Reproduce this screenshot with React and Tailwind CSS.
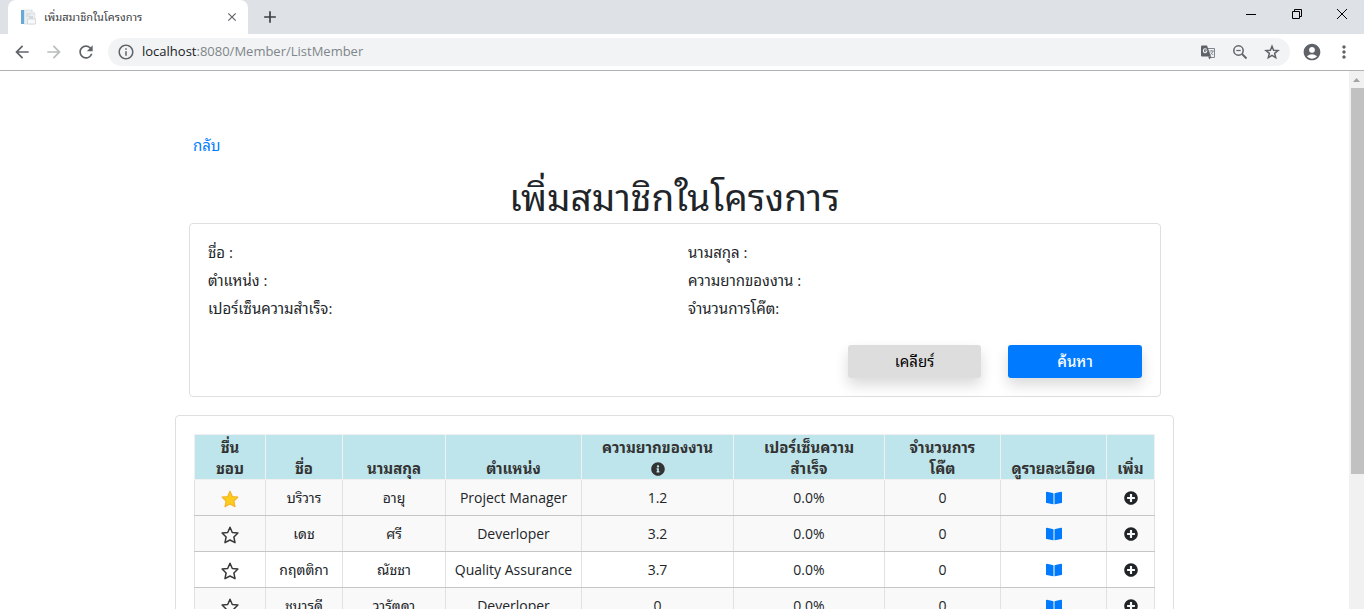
import {
  MdArrowBack, MdArrowForward, MdRefresh, MdInfoOutline,
  MdAccountCircle, MdMoreVert, MdClose, MdAdd,
} from "react-icons/md";
import { FaInfoCircle, FaPlusCircle } from "react-icons/fa";

const members = [
  { first: "บริวาร", last: "อายุ", role: "Project Manager", level: "1.2", done: "0.0%", codes: "0", favourite: true },
  { first: "เดช", last: "ศรี", role: "Deverloper", level: "3.2", done: "0.0%", codes: "0" },
  { first: "กฤตติกา", last: "ณัชชา", role: "Quality Assurance", level: "3.7", done: "0.0%", codes: "0" },
  { first: "ชนารดี", last: "วารัตดา", role: "Deverloper", level: "0", done: "0.0%", codes: "0" },
];

const fields = [
  { id: "first", label: "ชื่อ :" },
  { id: "last", label: "นามสกุล :" },
  { id: "role", label: "ตำแหน่ง :" },
  { id: "level", label: "ความยากของงาน :" },
  { id: "done", label: "เปอร์เซ็นความสำเร็จ:" },
  { id: "codes", label: "จำนวนการโค๊ต:" },
];

function Star({ filled }) {
  return (
    <svg viewBox="0 0 18 18" className="size-[18px]" aria-hidden="true">
      <path
        d="M9 1.300 L11.300 6.500 L16.900 7 L12.900 11 L14 16.700 L9 14 L4 16.700 L5.100 11 L1.100 7 L6.700 6.500 Z"
        fill={filled ? "#fccc1c" : "none"}
        stroke={filled ? "#f4b42c" : "#383838"}
        strokeWidth={filled ? 1.2 : 1.5}
        strokeLinejoin="round"
      />
    </svg>
  );
}

function Book() {
  return (
    <svg viewBox="0 0 16 14" className="h-[14px] w-4" fill="currentColor" aria-hidden="true">
      <path d="M0 1.600C0 1 .4.800 1 .800L6.600 1.900Q7.500 2.100 7.500 2.800V12.900Q7.500 13.300 7 13.200L.6 12Q0 11.900 0 11.400Z" />
      <path d="M16 1.600C16 1 15.600.800 15 .800L9.400 1.900Q8.500 2.100 8.500 2.800V12.900Q8.500 13.300 9 13.200L15.400 12Q16 11.900 16 11.400Z" />
    </svg>
  );
}

function TranslateIcon() {
  return (
    <svg viewBox="0 0 16 16" className="size-4" fill="none" aria-hidden="true">
      <path d="M7 4.500h7.500v9H9.500" stroke="#80868b" />
      <path d="M2 1.500h5l4 11H2q-1 0-1-1v-9q0-1 1-1z" fill="#5f6368" />
      <path d="M6.800 5.400Q4.700 3.900 3.600 5.700Q2.900 8 4.700 8.800Q6.600 9 6.800 7H5.200" stroke="#f1f3f4" strokeWidth="1.100" />
      <path d="M9.500 7h4.500M11.700 6v1M13 7.200q-.7 2-2.500 3.500M10.700 8.500l2.500 2.500" stroke="#80868b" strokeWidth=".9" />
      <path d="M9.500 15.500L8 12.500h3.500z" fill="#5f6368" />
    </svg>
  );
}

function ZoomOutIcon() {
  return (
    <svg viewBox="0 0 16 16" className="size-4" fill="none" stroke="currentColor" aria-hidden="true">
      <circle cx="6.500" cy="6.500" r="4.700" strokeWidth="1.500" />
      <path d="M4.300 6.500h4.400" strokeWidth="1.200" />
      <path d="M10 10l4.500 4.500" strokeWidth="1.800" />
    </svg>
  );
}

function BookmarkIcon() {
  return (
    <svg viewBox="0 0 16 16" className="size-4" fill="none" stroke="currentColor" strokeWidth="1.500" aria-hidden="true">
      <path d="M8 2.200l1.600 4 4.400.3-3.400 2.800 1.100 4.300L8 11.300l-3.700 2.300 1.100-4.300L2 6.500l4.400-.3z" />
    </svg>
  );
}

function Favicon() {
  return (
    <svg viewBox="0 0 16 16" className="size-4 shrink-0" aria-hidden="true">
      <path d="M4 1h8l3 3v11H4z" fill="#eceef0" stroke="#d8dce0" strokeWidth="0.6" />
      <path d="M12 1v3h3" fill="#fff" stroke="#ccd2d8" strokeWidth="0.6" />
      <path d="M1 1h3v14H1z" fill="#6aa8d8" />
      <path d="M4 1h1v14H4z" fill="#d5e4ef" />
      <path d="M6 5h5M6 7h3" stroke="#ccd4da" />
      <path d="M7.500 10h8v5h-8z" fill="#f8f9fa" stroke="#c2c8ce" strokeWidth="0.6" />
      <path d="M9 7h4v3H9z" fill="#d3d9de" />
    </svg>
  );
}

function TabStrip() {
  return (
    <div className="flex h-[34px] shrink-0 bg-[#dee1e6] pl-2">
      <div className="flex w-60 items-center rounded-t-lg bg-white pl-3 pr-[6px]">
        <Favicon />
        <span className="ml-2 grow whitespace-nowrap text-[11px] leading-4 text-[#3c4043]">เพิ่มสมาชิกในโครงการ</span>
        <button aria-label="Close tab" className="p-[3px] text-[#5f6368]"><MdClose className="size-[14px]" /></button>
      </div>
      <button aria-label="New tab" className="px-3 text-[#3c4043]"><MdAdd className="size-5" /></button>
      <div className="ml-auto flex items-center pb-[6px]">
        <button aria-label="Minimize" className="flex w-[46px] justify-center">
          <svg viewBox="0 0 10 10" className="size-[10px]"><path d="M0 5.5h10" stroke="#000" /></svg>
        </button>
        <button aria-label="Restore" className="flex w-[46px] justify-center">
          <svg viewBox="0 0 10 10" className="size-[10px]" fill="none" stroke="#000">
            <path d="M0.5 2.5h7v7h-7zM2.5 2.5v-2h7v7h-2" />
          </svg>
        </button>
        <button aria-label="Close" className="flex w-[44px] justify-center">
          <svg viewBox="0 0 10 10" className="size-[10px]"><path d="M0 0l10 10M10 0L0 10" stroke="#000" /></svg>
        </button>
      </div>
    </div>
  );
}

function Toolbar() {
  return (
    <div className="flex h-[37px] shrink-0 items-center border-b border-[#b0b1b3] bg-white pl-3 pr-[10px] text-[#5f6368]">
      <div className="flex gap-3">
        <button aria-label="Back"><MdArrowBack className="size-5" /></button>
        <button aria-label="Forward" className="text-[#babcbe]"><MdArrowForward className="size-5" /></button>
        <button aria-label="Reload"><MdRefresh className="size-5" /></button>
      </div>
      <div className="ml-3 flex h-7 grow items-center rounded-full bg-[#f1f3f4] px-[9px]">
        <MdInfoOutline className="size-[18px]" />
        <span className="ml-[7px] grow text-[13px] text-[#80868b]"><span className="text-[#202124]">localhost</span>:8080/Member/ListMember</span>
        <div className="flex gap-4 pr-px">
          <button aria-label="Translate"><TranslateIcon /></button>
          <button aria-label="Zoom"><ZoomOutIcon /></button>
          <button aria-label="Bookmark"><BookmarkIcon /></button>
        </div>
      </div>
      <button aria-label="Profile" className="ml-3"><MdAccountCircle className="size-5" /></button>
      <button aria-label="Menu" className="ml-3"><MdMoreVert className="size-5" /></button>
    </div>
  );
}

function SearchCard() {
  return (
    <form className="ml-[14px] mr-[13px] rounded border border-[#dfdfdf] px-[18px] pt-[14px] pb-[18px]">
      <div className="grid grid-cols-2 gap-x-[26px] text-[15px] leading-7">
        {fields.map((f) => (
          <div key={f.id} className="flex">
            <label htmlFor={f.id} className="whitespace-nowrap">{f.label}</label>
            <input id={f.id} className="min-w-0 grow px-2 outline-none" />
          </div>
        ))}
      </div>
      <div className="mt-[23px] flex justify-end gap-[27px] text-[15px]">
        <button type="reset" className="h-[33px] w-[133px] rounded-[3px] bg-[#dddddd] text-black shadow-[0_7px_14px_rgba(0,0,0,0.15)]">เคลียร์</button>
        <button type="button" className="h-[33px] w-[134px] rounded-[3px] bg-[#007bff] font-medium text-white shadow-[0_7px_14px_rgba(0,0,0,0.15)]">ค้นหา</button>
      </div>
    </form>
  );
}

const head = "border border-[#f0f0f0] p-0 align-bottom font-bold";
const cell = "h-9 border border-x-[#dee2e6] border-y-[#c6c6c6] p-0 align-middle";

function MemberTable() {
  return (
    <div className="mt-[18px] rounded border border-[#dfdfdf] p-[18px]">
      <table className="w-full table-fixed border-collapse text-center text-sm">
        <colgroup>
          <col className="w-[71px]" />
          <col className="w-[77px]" />
          <col className="w-[103px]" />
          <col className="w-[136px]" />
          <col className="w-[152px]" />
          <col className="w-[151px]" />
          <col className="w-[116px]" />
          <col className="w-[106px]" />
          <col className="w-[48px]" />
        </colgroup>
        <thead className="bg-[#bee5eb] text-[15px] leading-[21px] text-[#333]">
          <tr className="h-[45px]">
            <th className={head}>ชื่น<br />ชอบ</th>
            <th className={head}>ชื่อ</th>
            <th className={head}>นามสกุล</th>
            <th className={head}>ตำแหน่ง</th>
            <th className={head}>ความยากของงาน<br /><FaInfoCircle className="inline size-[14px] align-[-2px]" /></th>
            <th className={head}>เปอร์เซ็นความ<br />สำเร็จ</th>
            <th className={head}>จำนวนการ<br />โค๊ต</th>
            <th className={head}><span className="whitespace-nowrap">ดูรายละเอียด</span></th>
            <th className={head}>เพิ่ม</th>
          </tr>
        </thead>
        <tbody>
          {members.map((m, i) => (
            <tr key={m.first} className={i === 2 ? "bg-white" : "bg-[#f9f9f9]"}>
              <td className={cell}><button aria-label="Favourite" className="mx-auto block pt-[2px]"><Star filled={m.favourite} /></button></td>
              <td className={cell}>{m.first}</td>
              <td className={cell}>{m.last}</td>
              <td className={cell}>{m.role}</td>
              <td className={cell}>{m.level}</td>
              <td className={cell}>{m.done}</td>
              <td className={cell}>{m.codes}</td>
              <td className={cell}><a href="#detail" aria-label="Details" className="mx-auto block w-fit text-[#007bff]"><Book /></a></td>
              <td className={cell}><button aria-label="Add" className="mx-auto block"><FaPlusCircle className="size-[14px]" /></button></td>
            </tr>
          ))}
        </tbody>
      </table>
    </div>
  );
}

export default function App() {
  return (
    <div className="flex h-screen flex-col overflow-hidden bg-white font-['Open_Sans','Noto_Sans_Thai_Looped','Noto_Looped_Thai','Waree','Loma','Tahoma','Noto_Sans',sans-serif] text-[#212529]">
      <TabStrip />
      <Toolbar />
      <div className="flex min-h-0 grow">
        <main className="grow overflow-hidden">
          <div className="mx-auto max-w-[999px] pt-16">
            <a href="#back" className="ml-[18px] block w-fit text-[15px] leading-5 text-[#007bff]">กลับ</a>
            <h1 className="mt-[22px] mb-[6px] text-center text-[37px] leading-10 font-normal">เพิ่มสมาชิกในโครงการ</h1>
            <SearchCard />
            <MemberTable />
          </div>
        </main>
        <div className="flex w-[15px] flex-col bg-[#f1f1f1]" aria-hidden="true">
          <div className="flex h-[17px] items-center justify-center">
            <svg viewBox="0 0 7 4" className="h-1 w-[7px]"><path d="M0 4L3.5 0L7 4z" fill="#a3a3a3" /></svg>
          </div>
          <div className="ml-[2px] h-[386px] bg-[#c1c1c1]" />
        </div>
      </div>
    </div>
  );
}
